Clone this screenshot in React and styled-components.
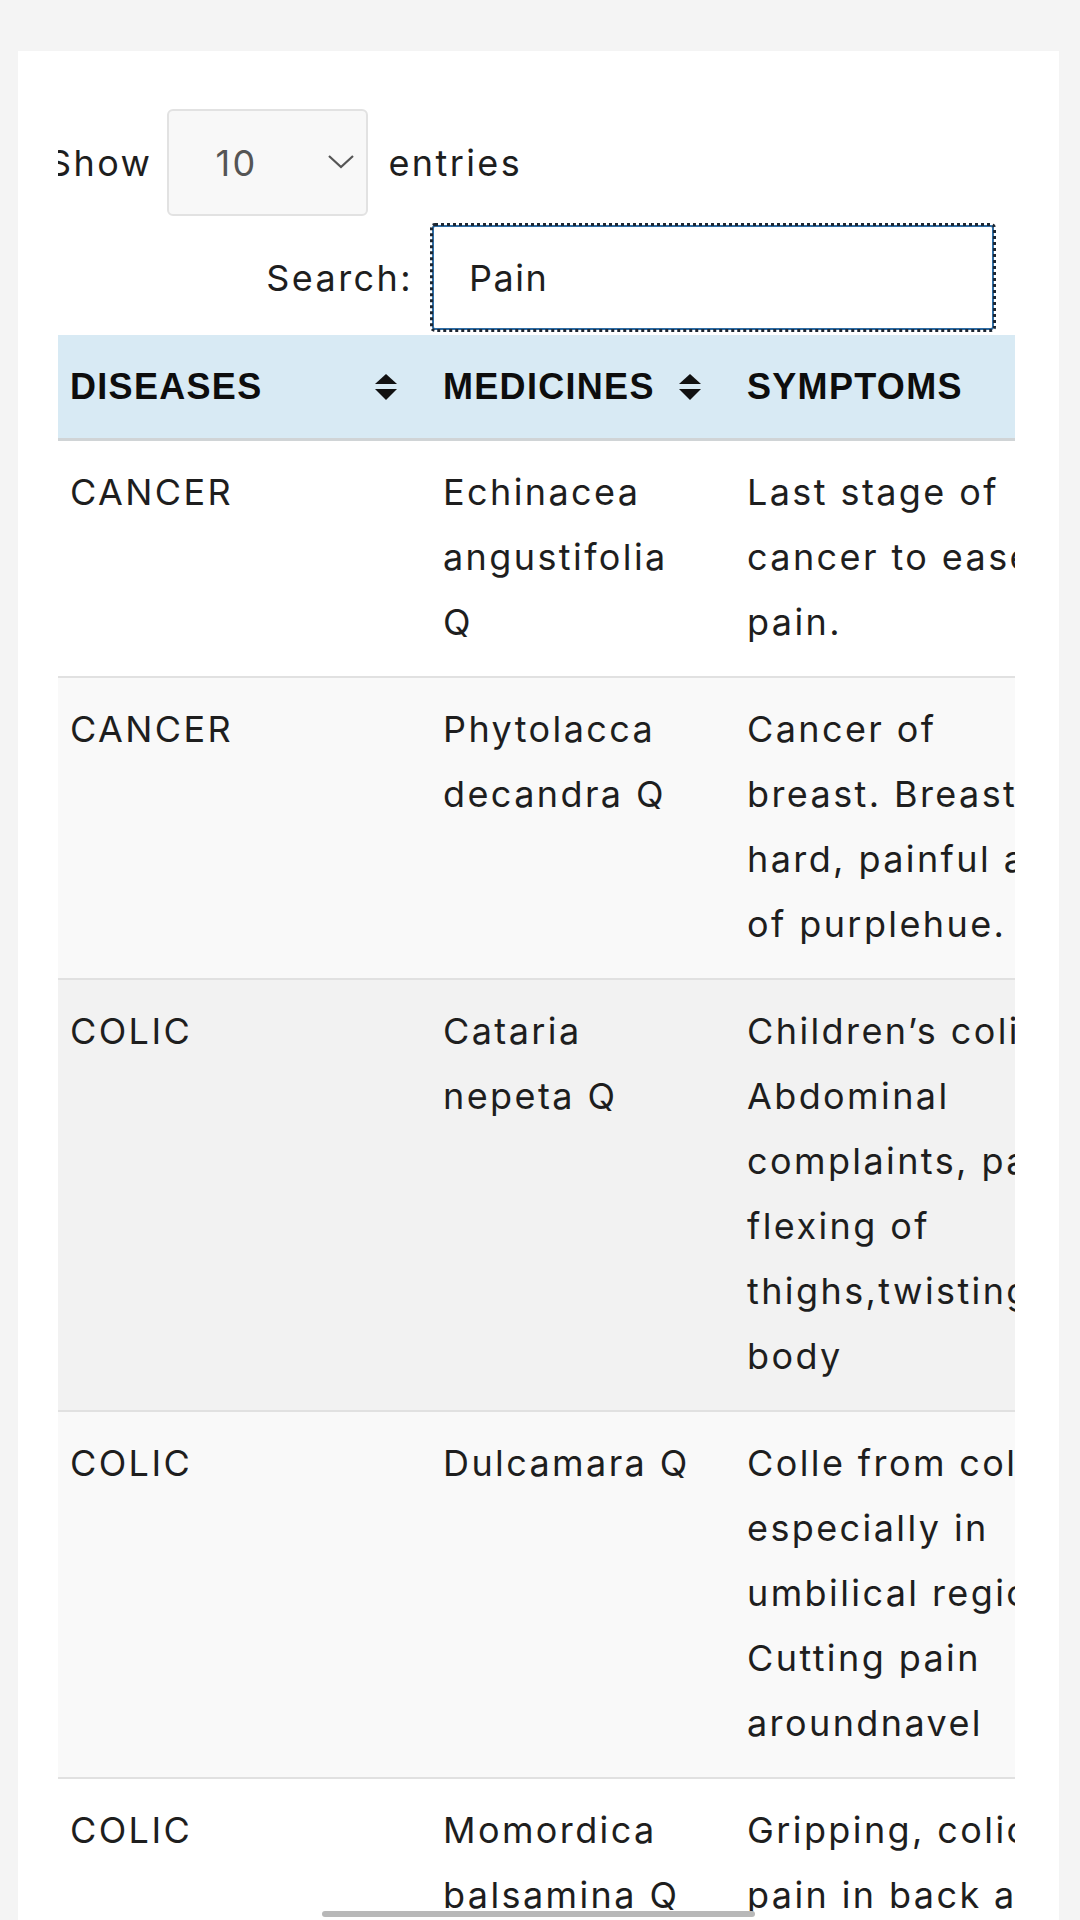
import React from "react";
import styled, { createGlobalStyle } from "styled-components";

const GlobalStyle = createGlobalStyle`
  body {
    margin: 0;
    background: #f4f4f4;
    font-family: Inter, "Liberation Sans", sans-serif;
    letter-spacing: 2.4px;
    color: #1e1e1e;
  }
`;

const Page = styled.div`
  padding: 51px 21px 0 18px;
  overflow: hidden;
  height: 1920px;
  box-sizing: border-box;
`;

const Card = styled.div`
  background: #fff;
  padding: 0 44px 0 40px;
  height: 100%;
`;

const Clip = styled.div`
  overflow: hidden;
`;

// content is scrolled a little to the left, like the real scroller
const Scrolled = styled.div`
  margin-left: -10px;
`;

const LengthRow = styled.div`
  display: flex;
  align-items: center;
  padding-top: 58px;
  font-size: 36px;
`;

const SelectBox = styled.div`
  position: relative;
  width: 201px;
  height: 107px;
  margin: 0 20px 0 15px;
  box-sizing: border-box;
  border: 2px solid #e2e2e2;
  border-radius: 6px;
  background: #f8f8f8;
  display: flex;
  align-items: center;
  padding-left: 46px;
  color: #555;
`;

const Caret = styled.svg`
  position: absolute;
  right: 12px;
  top: 44px;
`;

const SearchRow = styled.div`
  display: flex;
  align-items: center;
  justify-content: flex-end;
  margin-top: 9px;
  padding-right: 21px;
  font-size: 36px;
`;

const SearchInput = styled.div`
  width: 562px;
  height: 105px;
  box-sizing: border-box;
  margin-left: 19px;
  border: 2px solid #2f6ca3;
  border-radius: 3px;
  outline: 3px dotted #1d2733;
  outline-offset: -1px;
  display: flex;
  align-items: center;
  padding-left: 35px;
  letter-spacing: 1.5px;
`;

const Table = styled.table`
  margin-top: 5px;
  border-collapse: collapse;
  table-layout: fixed;
  width: 1100px;
  font-size: 36px;
`;

const HeadCell = styled.th`
  background: #d8eaf4;
  text-align: left;
  padding: 0 24px 0 22px;
  height: 103px;
  border-bottom: 3px solid #d0d4d6;
  font-family: "Liberation Sans", Arial, sans-serif;
  font-weight: 700;
  font-size: 36px;
  letter-spacing: 1.3px;
  color: #0d0d0d;
`;

const HeadInner = styled.div`
  display: flex;
  align-items: center;
  justify-content: space-between;
`;

const Row = styled.tr`
  background: ${({ tone }) => tone};
  border-top: 2px solid #e1e1e1;

  &:first-child {
    border-top: none;
  }
`;

const Cell = styled.td`
  vertical-align: top;
  padding: 19px 22px 21px 22px;
  line-height: 65px;
  white-space: nowrap;
`;

const Line = styled.div``;

const Scrollbar = styled.div`
  position: fixed;
  left: 322px;
  top: 1911px;
  width: 433px;
  height: 6px;
  border-radius: 3px;
  background: #b8b8b8;
`;

const SortIcon = () => (
  <svg width="22" height="26" viewBox="0 0 22 26">
    <path d="M11 0 L22 10 L0 10 Z" fill="#111" />
    <path d="M0 15 L22 15 L11 26 Z" fill="#111" />
  </svg>
);

const rows = [
  {
    disease: "CANCER",
    medicine: ["Echinacea", "angustifolia", "Q"],
    symptoms: ["Last stage of", "cancer to ease", "pain."],
    tone: "#ffffff",
  },
  {
    disease: "CANCER",
    medicine: ["Phytolacca", "decandra Q"],
    symptoms: ["Cancer of", "breast. Breast", "hard, painful and", "of purplehue."],
    tone: "#f9f9f9",
  },
  {
    disease: "COLIC",
    medicine: ["Cataria", "nepeta Q"],
    symptoms: [
      "Children\u2019s colic.",
      "Abdominal",
      "complaints, pain,",
      "flexing of",
      "thighs,twisting of",
      "body",
    ],
    tone: "#f2f2f2",
  },
  {
    disease: "COLIC",
    medicine: ["Dulcamara Q"],
    symptoms: [
      "Colle from cold,",
      "especially in",
      "umbilical region.",
      "Cutting pain",
      "aroundnavel",
    ],
    tone: "#f9f9f9",
  },
  {
    disease: "COLIC",
    medicine: ["Momordica", "balsamina Q"],
    symptoms: ["Gripping, colic", "pain in back and", "abdomen."],
    tone: "#ffffff",
  },
];

export default function App() {
  return (
    <>
      <GlobalStyle />
      <Page>
        <Card>
          <Clip>
            <Scrolled>
              <LengthRow>
                Show
                <SelectBox>
                  10
                  <Caret width="26" height="14" viewBox="0 0 26 14">
                    <path d="M1 1 L13 12 L25 1" fill="none" stroke="#555" strokeWidth="2.2" />
                  </Caret>
                </SelectBox>
                entries
              </LengthRow>
              <SearchRow>
                Search:
                <SearchInput>Pain</SearchInput>
              </SearchRow>
              <Table>
                <colgroup>
                  <col style={{ width: 373 }} />
                  <col style={{ width: 304 }} />
                  <col style={{ width: 423 }} />
                </colgroup>
                <thead>
                  <tr>
                    <HeadCell>
                      <HeadInner>
                        DISEASES
                        <SortIcon />
                      </HeadInner>
                    </HeadCell>
                    <HeadCell>
                      <HeadInner>
                        MEDICINES
                        <SortIcon />
                      </HeadInner>
                    </HeadCell>
                    <HeadCell>
                      <HeadInner>
                        SYMPTOMS
                        <SortIcon />
                      </HeadInner>
                    </HeadCell>
                  </tr>
                </thead>
                <tbody>
                  {rows.map((r, i) => (
                    <Row key={i} tone={r.tone}>
                      <Cell>{r.disease}</Cell>
                      <Cell>
                        {r.medicine.map((m) => (
                          <Line key={m}>{m}</Line>
                        ))}
                      </Cell>
                      <Cell>
                        {r.symptoms.map((s) => (
                          <Line key={s}>{s}</Line>
                        ))}
                      </Cell>
                    </Row>
                  ))}
                </tbody>
              </Table>
            </Scrolled>
          </Clip>
        </Card>
      </Page>
      <Scrollbar />
    </>
  );
}
